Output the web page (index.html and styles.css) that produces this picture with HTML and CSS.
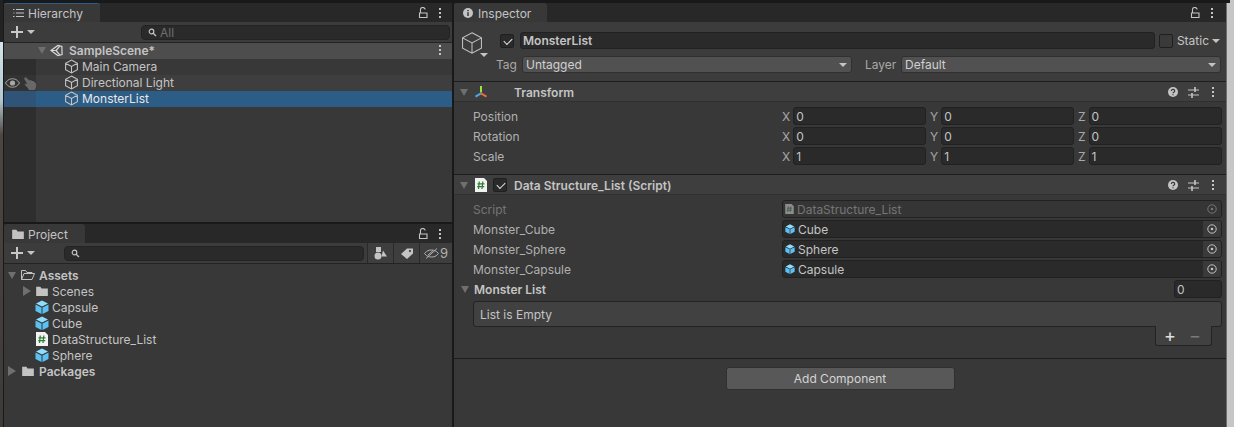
FILE: index.html
```html
<!DOCTYPE html>
<html lang="en">
<head>
  <meta charset="UTF-8">
  <title>Unity Editor</title>
  <link rel="stylesheet" href="styles.css">
</head>
<body>
  <svg class="defs" width="0" height="0">
    <defs>
      <symbol id="cube" viewBox="0 0 14 14">
        <path d="M7 1l5.500 3v6L7 13l-5.500-3V4zM1.500 4L7 7l5.500-3M7 7v6" fill="none" stroke="currentColor" stroke-width="1"/>
      </symbol>
      <symbol id="prefab" viewBox="0 0 14 14">
        <path d="M7 .5l6 3L7 6.500 1 3.500z" fill="#8fdcff"/>
        <path d="M.5 4.500l6 3V14l-6-3zM13.500 4.500l-6 3V14l6-3z" fill="#5cc0f2"/>
      </symbol>
      <symbol id="script" viewBox="0 0 12 14">
        <path d="M0 0h9l3 3v11H0z" fill="#f2f2f2"/>
        <path d="M4.300 3.500L3.500 11M7.800 3.500L7 11M2.500 5.800h7M2.200 8.700h7" stroke="#2e7d32" stroke-width="1.200" fill="none"/>
      </symbol>
      <symbol id="folder" viewBox="0 0 14 12">
        <path d="M0 1h5l1.500 2H14v9H0z" fill="#c2c2c2"/>
      </symbol>
      <symbol id="lock" viewBox="0 0 10 12">
        <path d="M2.500 5.500V3a2.300 2.300 0 0 1 4.600-.5M1.500 6h7.500v4.500H1.500z" fill="none" stroke="#c4c4c4" stroke-width="1.100"/>
      </symbol>
      <symbol id="dots" viewBox="0 0 4 12">
        <path d="M1 1h2v2H1zM1 5h2v2H1zM1 9h2v2H1z" fill="#c4c4c4"/>
      </symbol>
      <symbol id="target" viewBox="0 0 10 10">
        <circle cx="5" cy="5" r="4.200" fill="none" stroke="currentColor" stroke-width="1"/>
        <circle cx="5" cy="5" r="1.300" fill="currentColor"/>
      </symbol>
      <symbol id="help" viewBox="0 0 10 10">
        <circle cx="5" cy="5" r="5" fill="#c4c4c4"/>
        <path d="M3.300 3.900a1.700 1.500 0 1 1 2.500 1.300c-.6.400-.8.600-.8 1.100M5 7.200v1.100" fill="none" stroke="#383838" stroke-width="1.200"/>
      </symbol>
      <symbol id="sliders" viewBox="0 0 11 11">
        <path d="M0 3h11M0 8h11" stroke="#c4c4c4" stroke-width="1"/>
        <path d="M7 0v5M4 6v5" stroke="#c4c4c4" stroke-width="1.600"/>
      </symbol>
      <symbol id="axes" viewBox="0 0 14 14">
        <path d="M6 1h2v6.500H6z" fill="#a2e23c"/>
        <path d="M6.500 7.500l1 1.700L2 12.500 1 10.700z" fill="#4aa8e8"/>
        <path d="M7.500 7.500l-1 1.700 5.500 3.300 1-1.800z" fill="#ee6a3c"/>
      </symbol>
    </defs>
  </svg>

  <div class="edge-left"></div>

  <div class="left-col">
    <section class="panel hierarchy">
      <div class="tabbar">
        <div class="tab tab-active">
          <svg class="tab-icon" width="11" height="10" viewBox="0 0 11 10"><path d="M3 1.500h8M3 5h8M3 8.500h8M0 1.500h1.500M.5 5h1M0 8.500h1.500" stroke="#c4c4c4" fill="none"/></svg>
          <span>Hierarchy</span>
        </div>
        <div class="tab-tools">
          <svg class="i-lock"><use href="#lock"/></svg>
          <svg class="i-dots"><use href="#dots"/></svg>
        </div>
      </div>
      <div class="toolbar">
        <div class="add"><span class="plus"></span><span class="caret"></span></div>
        <div class="search search-h">
          <svg width="9" height="9" viewBox="0 0 9 9"><circle cx="3.500" cy="3.500" r="2.300" fill="none" stroke="#c4c4c4" stroke-width="1.200"/><path d="M5.200 5.200L8 8" stroke="#c4c4c4" stroke-width="1.300"/></svg>
          <span>All</span>
        </div>
      </div>
      <div class="tree">
        <div class="gutter">
          <div class="g-row g-scene"></div>
          <div class="g-row"></div>
          <div class="g-row g-vis">
            <svg width="15" height="10" viewBox="0 0 15 10"><path d="M.5 5C3 1.500 5 .8 7.500.8S12 1.500 14.500 5C12 8.500 10 9.200 7.500 9.200S3 8.500.5 5z" fill="none" stroke="#a8a8a8"/><circle cx="7.500" cy="5" r="2.600" fill="#a8a8a8"/></svg>
            <svg class="hand" width="12" height="13" viewBox="0 0 12 13"><path d="M0 1.500L1.500 0l4 3.500L7 3l1 1 1.500 0 2.500 2.500V10l-1 3H5L3 10 .5 7.500 2 6.500l1.500 1z" fill="#686868"/></svg>
          </div>
          <div class="g-row g-sel"></div>
        </div>
        <div class="rows">
          <div class="h-row h-scene">
            <span class="tri tri-down"></span>
            <svg class="unity" width="13" height="13" viewBox="0 0 14 14"><path d="M1 7L8.500 1.500 12.800 2.700 13 11.300 8.500 12.500zM1 7h5.500M6.500 7l4-4.700M6.500 7l4 4.700" fill="none" stroke="#d8d8d8" stroke-width="1.300"/></svg>
            <span class="scene-name">SampleScene*</span>
            <svg class="i-dots scene-dots"><use href="#dots"/></svg>
          </div>
          <div class="h-row h-item"><svg class="ic"><use href="#cube"/></svg><span>Main Camera</span></div>
          <div class="h-row h-item"><svg class="ic"><use href="#cube"/></svg><span>Directional Light</span></div>
          <div class="h-row h-item h-sel"><svg class="ic"><use href="#cube"/></svg><span>MonsterList</span></div>
        </div>
      </div>
    </section>

    <section class="panel project">
      <div class="tabbar tabbar-project">
        <div class="tab tab-project">
          <svg class="tab-icon" width="12" height="10"><use href="#folder"/></svg>
          <span>Project</span>
        </div>
        <div class="tab-tools">
          <svg class="i-lock"><use href="#lock"/></svg>
          <svg class="i-dots"><use href="#dots"/></svg>
        </div>
      </div>
      <div class="toolbar">
        <div class="add"><span class="plus"></span><span class="caret"></span></div>
        <div class="search search-p">
          <svg width="9" height="9" viewBox="0 0 9 9"><circle cx="3.500" cy="3.500" r="2.300" fill="none" stroke="#c4c4c4" stroke-width="1.200"/><path d="M5.200 5.200L8 8" stroke="#c4c4c4" stroke-width="1.300"/></svg>
        </div>
        <div class="filter-btn filter-first">
          <svg width="13" height="13" viewBox="0 0 13 13"><path d="M2 0h5v5H2z" fill="#c4c4c4"/><circle cx="4" cy="9" r="3.500" fill="#c4c4c4"/><path d="M9 3.500l4 6H7.500z" fill="#c4c4c4"/></svg>
        </div>
        <div class="filter-btn">
          <svg width="12" height="11" viewBox="0 0 12 11"><path fill-rule="evenodd" d="M0 6L6 0.500h6v5L6 11zM9 2a1 1 0 1 0 .01 0z" fill="#c4c4c4"/></svg>
        </div>
        <div class="filter-btn filter-last">
          <svg width="15" height="11" viewBox="0 0 15 11"><path d="M.5 5.500C3 2.500 5 2 7.500 2s4.500.5 7 3.500C12 8.500 10 9 7.500 9S3 8.500.5 5.500zM2 10.500L13 .5M4 7l5-4.500" fill="none" stroke="#b0b0b0"/></svg>
          <span>9</span>
        </div>
      </div>
      <div class="p-tree">
        <div class="p-row p-root"><span class="tri tri-down"></span><svg class="fold fold-open" width="14" height="12" viewBox="0 0 14 12"><path d="M.5 10.500v-9h4l1.500 2h5v1.500M.5 10.500l2.500-6h10.500l-2.500 6z" fill="none" stroke="#c2c2c2"/></svg><b>Assets</b></div>
        <div class="p-row p-sub"><span class="tri tri-right"></span><svg class="fold" width="12" height="10"><use href="#folder"/></svg><span>Scenes</span></div>
        <div class="p-row p-leaf"><svg class="ic ic-prefab"><use href="#prefab"/></svg><span>Capsule</span></div>
        <div class="p-row p-leaf"><svg class="ic ic-prefab"><use href="#prefab"/></svg><span>Cube</span></div>
        <div class="p-row p-leaf"><svg class="ic ic-script"><use href="#script"/></svg><span>DataStructure_List</span></div>
        <div class="p-row p-leaf"><svg class="ic ic-prefab"><use href="#prefab"/></svg><span>Sphere</span></div>
        <div class="p-row p-root"><span class="tri tri-right"></span><svg class="fold fold-closed" width="12" height="10"><use href="#folder"/></svg><b>Packages</b></div>
      </div>
    </section>
  </div>

  <section class="panel inspector">
    <div class="tabbar">
      <div class="tab tab-inspector">
        <svg class="tab-icon" width="10" height="10" viewBox="0 0 10 10"><circle cx="5" cy="5" r="5" fill="#c4c4c4"/><path d="M5 2v1.300M5 4.300V8" stroke="#303030" stroke-width="1.400"/></svg>
        <span>Inspector</span>
      </div>
      <div class="tab-tools tools-insp">
        <svg class="i-lock"><use href="#lock"/></svg>
        <svg class="i-dots"><use href="#dots"/></svg>
      </div>
    </div>

    <div class="go-head">
      <div class="go-icon">
        <svg class="go-cube" width="24" height="24" viewBox="0 0 14 14"><path d="M7 1l5.500 3v6L7 13l-5.500-3V4zM1.500 4L7 7l5.500-3M7 7v6" fill="none" stroke="#c4c4c4" stroke-width=".6"/></svg>
        <span class="caret caret-go"></span>
      </div>
      <div class="go-fields">
        <div class="go-row name-row">
          <span class="check"></span>
          <div class="field name-field">MonsterList</div>
          <span class="check check-off"></span>
          <span class="static">Static</span>
          <span class="caret"></span>
        </div>
        <div class="go-row tag-row">
          <span class="lbl">Tag</span>
          <div class="select select-tag">Untagged<span class="caret"></span></div>
          <span class="lbl lbl-layer">Layer</span>
          <div class="select select-layer">Default<span class="caret"></span></div>
        </div>
      </div>
    </div>

    <div class="comp-head">
      <span class="tri tri-down"></span>
      <svg class="comp-icon" width="14" height="14"><use href="#axes"/></svg>
      <span class="comp-title comp-title-t">Transform</span>
      <div class="comp-tools">
        <svg width="10" height="10"><use href="#help"/></svg>
        <svg width="11" height="11"><use href="#sliders"/></svg>
        <svg class="i-dots"><use href="#dots"/></svg>
      </div>
    </div>
    <div class="comp-body">
      <div class="prop"><span class="prop-name">Position</span>
        <div class="xyz">
          <div class="axis"><span>X</span><div class="field num">0</div></div>
          <div class="axis"><span>Y</span><div class="field num">0</div></div>
          <div class="axis"><span>Z</span><div class="field num">0</div></div>
        </div>
      </div>
      <div class="prop"><span class="prop-name">Rotation</span>
        <div class="xyz">
          <div class="axis"><span>X</span><div class="field num">0</div></div>
          <div class="axis"><span>Y</span><div class="field num">0</div></div>
          <div class="axis"><span>Z</span><div class="field num">0</div></div>
        </div>
      </div>
      <div class="prop"><span class="prop-name">Scale</span>
        <div class="xyz">
          <div class="axis"><span>X</span><div class="field num">1</div></div>
          <div class="axis"><span>Y</span><div class="field num">1</div></div>
          <div class="axis"><span>Z</span><div class="field num">1</div></div>
        </div>
      </div>
    </div>

    <div class="comp-head comp-script">
      <span class="tri tri-down"></span>
      <svg class="comp-icon" width="12" height="14"><use href="#script"/></svg>
      <span class="check check-comp"></span>
      <span class="comp-title">Data Structure_List (Script)</span>
      <div class="comp-tools">
        <svg width="10" height="10"><use href="#help"/></svg>
        <svg width="11" height="11"><use href="#sliders"/></svg>
        <svg class="i-dots"><use href="#dots"/></svg>
      </div>
    </div>
    <div class="comp-body script-body">
      <div class="prop prop-disabled"><span class="prop-name">Script</span>
        <div class="field obj">
          <svg class="obj-icon" width="9" height="10" viewBox="0 0 12 14"><path d="M0 0h9l3 3v11H0z" fill="#8c8c8c"/><path d="M4.300 3.500L3.500 11M7.800 3.500L7 11M2.500 5.800h7M2.200 8.700h7" stroke="#3e5e40" stroke-width="1.200"/></svg>
          <span>DataStructure_List</span>
          <span class="picker"><svg width="10" height="10"><use href="#target"/></svg></span>
        </div>
      </div>
      <div class="prop"><span class="prop-name">Monster_Cube</span>
        <div class="field obj">
          <svg class="obj-icon" width="10" height="10"><use href="#prefab"/></svg>
          <span>Cube</span>
          <span class="picker"><svg width="10" height="10"><use href="#target"/></svg></span>
        </div>
      </div>
      <div class="prop"><span class="prop-name">Monster_Sphere</span>
        <div class="field obj">
          <svg class="obj-icon" width="10" height="10"><use href="#prefab"/></svg>
          <span>Sphere</span>
          <span class="picker"><svg width="10" height="10"><use href="#target"/></svg></span>
        </div>
      </div>
      <div class="prop"><span class="prop-name">Monster_Capsule</span>
        <div class="field obj">
          <svg class="obj-icon" width="10" height="10"><use href="#prefab"/></svg>
          <span>Capsule</span>
          <span class="picker"><svg width="10" height="10"><use href="#target"/></svg></span>
        </div>
      </div>
      <div class="list-head">
        <span class="tri tri-down"></span>
        <b>Monster List</b>
        <div class="field count">0</div>
      </div>
      <div class="list-box">List is Empty</div>
      <div class="list-foot">
        <div class="foot-btns"><span class="foot-plus">+</span><span class="foot-minus">&minus;</span></div>
      </div>
    </div>
    <div class="add-row">
      <div class="add-btn">Add Component</div>
    </div>
  </section>

  <div class="edge-right"></div>
</body>
</html>
```

FILE: styles.css
```css
* {
  box-sizing: border-box;
}
html, body {
  margin: 0;
  height: 427px;
  overflow: hidden;
}
body {
  display: flex;
  font-family: Inter, "Liberation Sans", sans-serif;
  font-size: 12px;
  color: #c4c4c4;
  background-color: #191919;
}
svg {
  display: block;
  flex: none;
}
.defs {
  position: absolute;
}
.edge-left {
  width: 3px;
  background: linear-gradient(#222222 42px, #d4e4ea 42px, #b4c8d0 100px, #4c4642 135px, #3e3a38);
}
.edge-right {
  width: 8px;
  background:
    linear-gradient(#191919, #191919) top left / 4px 3px no-repeat,
    linear-gradient(90deg, #6e6e6e 1px, #c6c6c6 1px);
}
.left-col {
  width: 449px;
  padding-left: 1px;
  display: flex;
  flex-direction: column;
  gap: 1px;
}
.panel {
  background-color: #383838;
}
.hierarchy {
  height: 222px;
}
.project {
  flex: 1;
}
.inspector {
  width: 772px;
  margin-left: 2px;
}

/* tabs */
.tabbar {
  height: 22px;
  padding-top: 3px;
  display: flex;
  background-color: #282828;
  box-shadow: inset 0 3px 0 #191919;
}
.tabbar-project {
  height: 20px;
  padding-top: 1px;
  box-shadow: inset 0 1px 0 #191919;
}
.tab {
  height: 19px;
  padding-left: 9px;
  display: flex;
  align-items: center;
  gap: 4px;
  background-color: #383838;
  border-radius: 3px 3px 0 0;
  color: #c4c4c4;
}
.tab-active {
  width: 96px;
  border-top: 1px solid #2c5d87;
}
.tab-project {
  width: 81px;
  padding-left: 8px;
  padding-top: 1px;
}
.tab-inspector {
  width: 93px;
  gap: 5px;
  padding-top: 1px;
}
.tab-tools {
  margin-left: auto;
  display: flex;
  align-items: center;
  gap: 10px;
  padding-right: 10px;
}
.tools-insp {
  padding-right: 12px;
}
.i-lock {
  width: 10px;
  height: 12px;
}
.i-dots {
  width: 4px;
  height: 12px;
}

/* toolbar */
.toolbar {
  height: 21px;
  display: flex;
  align-items: center;
  border-bottom: 1px solid #232323;
  background-color: #3c3c3c;
}
.add {
  width: 34px;
  margin-left: 7px;
  display: flex;
  align-items: center;
  gap: 4px;
}
.plus {
  width: 12px;
  height: 12px;
  background:
    linear-gradient(#c8c8c8, #c8c8c8) center / 12px 2px no-repeat,
    linear-gradient(#c8c8c8, #c8c8c8) center / 2px 12px no-repeat;
}
.caret {
  width: 0;
  height: 0;
  flex: none;
  border-left: 4px solid transparent;
  border-right: 4px solid transparent;
  border-top: 4px solid #c4c4c4;
}
.search {
  height: 15px;
  display: flex;
  align-items: center;
  gap: 3px;
  padding-left: 6px;
  background-color: #2a2a2a;
  border: 1px solid #232323;
  border-radius: 4px;
  color: #6f6f6f;
}
.search-h {
  width: 309px;
  margin-left: 96px;
}
.search-p {
  width: 300px;
  margin-left: 19px;
}
.filter-btn {
  width: 26px;
  height: 20px;
  display: flex;
  align-items: center;
  justify-content: center;
  border-left: 1px solid #2a2a2a;
  background-color: #3e3e3e;
}
.filter-first {
  margin-left: 3px;
}
.filter-last {
  flex: 1;
  gap: 1px;
  color: #b0b0b0;
  font-size: 13px;
}

/* hierarchy tree */
.tree {
  display: flex;
  height: 179px;
}
.gutter {
  width: 32px;
  background-color: #2e2e2e;
}
.g-row {
  height: 16px;
}
.g-scene {
  background-color: #4d4d4d;
}
.g-vis {
  display: flex;
  align-items: center;
  gap: 4px;
  padding-left: 1px;
  background-color: #333333;
}
.g-sel {
  background-color: #2f5478;
}
.rows {
  flex: 1;
}
.h-row {
  height: 16px;
  padding-bottom: 2px;
  display: flex;
  align-items: center;
}
.h-scene {
  padding-left: 2px;
  background-color: #4d4d4d;
  font-weight: 600;
}
.unity {
  margin: 0 5px 0 4px;
}
.scene-name {
  margin-left: 1px;
}
.scene-dots {
  margin-left: auto;
  margin-right: 10px;
}
.h-item {
  padding-left: 28px;
  gap: 3px;
}
.h-item:nth-child(3) {
  background-color: #3e3e3e;
}
.h-sel {
  background-color: #2c5d87;
  color: #e8e8e8;
}
.ic {
  width: 15px;
  height: 15px;
  color: #c4c4c4;
}
.tri {
  width: 0;
  height: 0;
  flex: none;
}
.tri-down {
  border-left: 4.500px solid transparent;
  border-right: 4.500px solid transparent;
  border-top: 7px solid #6f6f6f;
}
.tri-right {
  border-top: 5px solid transparent;
  border-bottom: 5px solid transparent;
  border-left: 8px solid #6f6f6f;
}

/* project tree */
.p-tree {
  padding-top: 3px;
}
.p-row {
  height: 16px;
  display: flex;
  align-items: center;
  padding-left: 4px;
}
.p-row b {
  font-weight: 600;
}
.fold {
  margin-left: 5px;
  margin-right: 4px;
}
.fold-open {
  margin-right: 4px;
}
.fold-closed {
  margin-right: 5px;
}
.p-root .tri-right {
  margin-right: 1px;
}
.p-sub {
  padding-left: 19px;
}
.p-leaf {
  padding-left: 31px;
  gap: 3px;
}
.ic-prefab, .ic-script {
  width: 14px;
  height: 14px;
}

/* inspector header */
.go-head {
  height: 60px;
  padding: 10px 5px 0 6px;
  display: flex;
  background-color: #3c3c3c;
  border-bottom: 1px solid #1d1d1d;
}
.go-icon {
  width: 32px;
  position: relative;
}
.go-cube {
  margin-top: -1px;
}
.caret-go {
  position: absolute;
  left: 20px;
  top: 21px;
}
.go-fields {
  flex: 1;
}
.go-row {
  height: 17px;
  display: flex;
  align-items: center;
}
.name-row {
  padding-right: 1px;
}
.tag-row {
  margin-top: 7px;
}
.check {
  width: 14px;
  height: 14px;
  flex: none;
  margin: 0 6px 0 8px;
  background-color: #2a2a2a;
  border: 1px solid #1f1f1f;
  border-radius: 2px;
  position: relative;
}
.check::after {
  content: "";
  position: absolute;
  left: 3px;
  top: 1px;
  width: 7px;
  height: 4px;
  margin-top: 2px;
  border-left: 1.500px solid #e4e4e4;
  border-bottom: 1.500px solid #e4e4e4;
  transform: rotate(-45deg);
}
.check-off {
  margin: 0 4px 0 4px;
  background-color: #3a3a3a;
}
.check-off::after {
  display: none;
}
.check-comp {
  margin: 0 7px 0 6px;
}
.static {
  margin-right: 3px;
}
.field {
  height: 18px;
  display: flex;
  align-items: center;
  background-color: #2a2a2a;
  border: 1px solid #212121;
  border-radius: 3px;
  padding-left: 2px;
}
.name-field {
  flex: 1;
  height: 17px;
  font-weight: 600;
}
.lbl {
  width: 26px;
  margin-left: 4px;
  color: #a8a8a8;
  flex: none;
}
.lbl-layer {
  width: 36px;
  margin-left: 13px;
}
.select {
  height: 17px;
  padding: 0 4px 0 3px;
  display: flex;
  align-items: center;
  justify-content: space-between;
  background-color: #515151;
  border: 1px solid #303030;
  border-radius: 3px;
  color: #d0d0d0;
}
.select-tag {
  width: 330px;
}
.select-layer {
  flex: 1;
}

/* components */
.comp-head {
  height: 20px;
  display: flex;
  align-items: center;
  padding: 1px 0 0 6px;
  background-color: #3e3e3e;
  border-bottom: 1px solid #303030;
}
.comp-icon {
  margin-left: 6px;
}
.comp-script .comp-icon {
  margin-left: 7px;
}
.comp-title {
  font-weight: 600;
}
.comp-title-t {
  margin-left: 26px;
}
.comp-tools {
  margin-left: auto;
  display: flex;
  align-items: center;
  gap: 10px;
  padding-right: 11px;
}
.comp-tools .i-dots {
  margin-left: 2px;
}
.comp-body {
  padding: 4px 4px 0 19px;
  height: 73px;
  border-bottom: 1px solid #1d1d1d;
}
.prop {
  height: 20px;
  display: flex;
  align-items: center;
}
.prop-name {
  width: 309px;
  flex: none;
  color: #b0b0b0;
}
.xyz {
  flex: 1;
  display: flex;
  gap: 4px;
}
.axis {
  flex: 1;
  display: flex;
  align-items: center;
  gap: 3px;
  color: #a8a8a8;
}
.axis .field {
  flex: 1;
}
.num {
  color: #c4c4c4;
}
.script-body {
  height: auto;
}
.obj {
  flex: 1;
  gap: 3px;
  overflow: hidden;
}
.picker {
  margin-left: auto;
  width: 18px;
  height: 16px;
  display: flex;
  align-items: center;
  justify-content: center;
  background-color: #3a3a3a;
  color: #c4c4c4;
}
.prop-disabled .prop-name,
.prop-disabled .obj {
  color: #757575;
}
.prop-disabled .obj {
  background-color: #353535;
}
.prop-disabled .picker {
  color: #757575;
  background-color: #353535;
}
.list-head {
  height: 20px;
  display: flex;
  align-items: center;
  margin-left: -12px;
  gap: 4px;
}
.list-head b {
  margin-left: 1px;
  font-weight: 600;
  color: #c4c4c4;
}
.count {
  width: 48px;
  margin-left: auto;
}
.list-box {
  height: 26px;
  margin-top: 2px;
  padding: 5px 6px 0;
  background-color: #414141;
  border: 1px solid #232323;
  border-radius: 3px;
}
.list-foot {
  height: 31px;
  display: flex;
  justify-content: flex-end;
}
.foot-btns {
  width: 57px;
  height: 20px;
  margin-right: 10px;
  margin-top: -1px;
  padding-left: 8px;
  display: flex;
  gap: 13px;
  align-items: center;
  background-color: #414141;
  border: 1px solid #232323;
  border-top: none;
  border-radius: 0 0 3px 3px;
  font-size: 18px;
}
.foot-plus {
  color: #e0e0e0;
}
.foot-minus {
  color: #7a7a7a;
}
.add-row {
  padding-top: 8px;
  display: flex;
  justify-content: center;
}
.add-btn {
  width: 229px;
  height: 23px;
  display: flex;
  align-items: center;
  justify-content: center;
  background-color: #585858;
  border: 1px solid #303030;
  border-radius: 3px;
  color: #d4d4d4;
}
```
